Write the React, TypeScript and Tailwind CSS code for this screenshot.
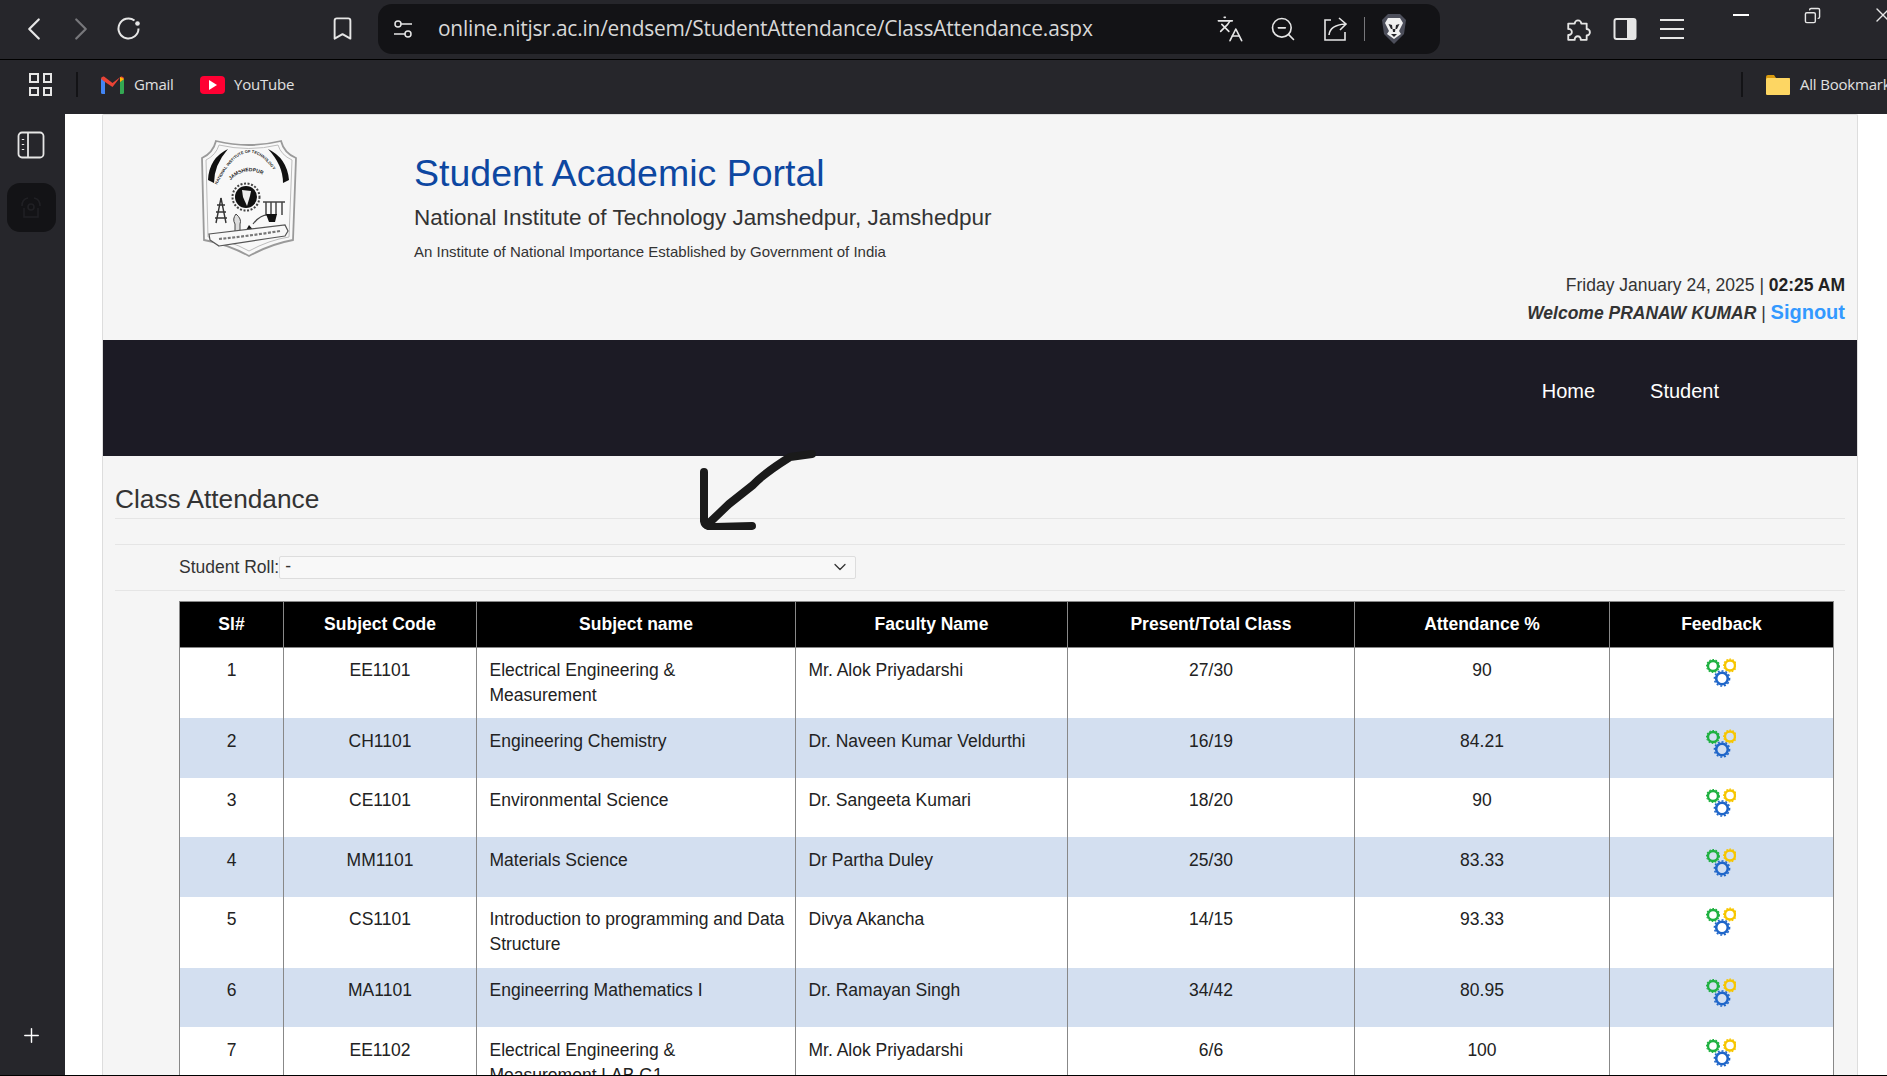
import { ChevronLeft, ChevronRight, Bookmark, Languages, ZoomOut, Copy, X, Plus, ChevronDown } from "lucide-react";

const rows = [
  { no: 1, code: "EE1101", name: "Electrical Engineering & Measurement", faculty: "Mr. Alok Priyadarshi", count: "27/30", pct: "90", tall: true },
  { no: 2, code: "CH1101", name: "Engineering Chemistry", faculty: "Dr. Naveen Kumar Veldurthi", count: "16/19", pct: "84.21" },
  { no: 3, code: "CE1101", name: "Environmental Science", faculty: "Dr. Sangeeta Kumari", count: "18/20", pct: "90" },
  { no: 4, code: "MM1101", name: "Materials Science", faculty: "Dr Partha Duley", count: "25/30", pct: "83.33" },
  { no: 5, code: "CS1101", name: "Introduction to programming and Data Structure", faculty: "Divya Akancha", count: "14/15", pct: "93.33", tall: true },
  { no: 6, code: "MA1101", name: "Engineerring Mathematics I", faculty: "Dr. Ramayan Singh", count: "34/42", pct: "80.95" },
  { no: 7, code: "EE1102", name: "Electrical Engineering & Measurement LAB G1", faculty: "Mr. Alok Priyadarshi", count: "6/6", pct: "100", tall: true },
];

function Gears() {
  return (
    <svg width="30" height="30" viewBox="0 0 30 30" className="mx-auto -translate-x-px -translate-y-px" fill="none">
      <circle cx="7" cy="9" r="5" stroke="#1fb141" strokeWidth="2.4" />
      <circle cx="7" cy="9" r="6.4" stroke="#1fb141" strokeWidth="1.2" strokeDasharray="1.6 1.6" />
      <circle cx="24" cy="8.5" r="5" stroke="#f7c600" strokeWidth="2.4" />
      <circle cx="24" cy="8.5" r="6.4" stroke="#f7c600" strokeWidth="1.2" strokeDasharray="1.6 1.6" />
      <circle cx="16" cy="21.5" r="5.8" stroke="#1f66c9" strokeWidth="2.6" />
      <circle cx="16" cy="21.5" r="7.6" stroke="#1f66c9" strokeWidth="1.5" strokeDasharray="2 1.9" />
    </svg>
  );
}

function Crest() {
  return (
    <svg width="96" height="117" viewBox="0 0 96 117" fill="none">
      <path d="M15 1 Q48 9 80 1 Q83 13 95 18 L92 100 Q70 104 48 116 Q26 104 3 100 L1 18 Q12 13 15 1Z" fill="#f8f8f8" stroke="#9a9a9a" strokeWidth="1.8" />
      <path d="M18 5 Q48 12 77 5 Q80 15 91 20 L88 97 Q68 100 48 111 Q28 100 7 97 L5 20 Q15 15 18 5Z" stroke="#bdbdbd" strokeWidth="1" />
      <path d="M27 9 Q8 18 7 40 L13 43 Q13 25 27 9Z" fill="#111" />
      <path d="M67 9 Q86 18 88 40 L82 43 Q82 25 67 9Z" fill="#111" />
      <path id="crest-arc" d="M16 45 Q47 -18 80 42" />
      <text fontSize="4" fontFamily="Liberation Sans, sans-serif" fontWeight="700" fill="#222">
        <textPath href="#crest-arc">NATIONAL INSTITUTE OF TECHNOLOGY</textPath>
      </text>
      <path id="crest-arc-2" d="M24 46 Q47 18 72 43" />
      <text fontSize="5" fontFamily="Liberation Sans, sans-serif" fontWeight="700" fill="#222">
        <textPath href="#crest-arc-2" startOffset="14%">JAMSHEDPUR</textPath>
      </text>
      <circle cx="45" cy="57" r="13.5" stroke="#444" strokeWidth="2" strokeDasharray="2 1.6" />
      <circle cx="45" cy="57" r="11" fill="#111" />
      <path d="M41 50 L50 51 L49 56 L46 66 L42 57Z" fill="#eee" />
      <path d="M20 58 L15 83 M20 58 L25 83 M16 65 H24 M15 72 H25 M14 78 H26" stroke="#333" strokeWidth="1.4" />
      <path d="M62 62 H84 M65 62 V75 M70 62 V75 M75 62 V75 M81 62 V75" stroke="#444" strokeWidth="1.5" />
      <path d="M35 74 Q31 79 34 84 V92 H39 V84 Q41 79 35 74Z" fill="#ddd" stroke="#444" />
      <path d="M44 92 L48 85 L54 92Z" fill="#111" />
      <path d="M52 84 Q60 74 68 75" stroke="#444" strokeWidth="1.2" />
      <path d="M65 74 H76 L74 82 H68Z" fill="#111" />
      <path d="M8 94 L84 85 L87 91 L84 96 Q50 101 18 106 L9 100Z" fill="#f8f8f8" stroke="#555" strokeWidth="1.2" />
      <path d="M18 99 Q48 96 79 91" stroke="#777" strokeWidth="2.2" strokeDasharray="3 1.5" />
    </svg>
  );
}

function Slot({ children }: { children: React.ReactNode }) {
  return <div className="w-[47px] flex justify-center items-center shrink-0">{children}</div>;
}

function Toolbar() {
  return (
    <div className="h-[60px] bg-[#26262b] border-b border-black flex items-center pl-[10.5px] pb-[2px] text-[#e6e6e6] shrink-0">
      <Slot><ChevronLeft size={38} strokeWidth={1.4} /></Slot>
      <Slot><ChevronRight size={38} strokeWidth={1.4} className="text-[#77777b]" /></Slot>
      <Slot>
        <svg width="25" height="25" viewBox="0 0 25 25" fill="none" stroke="currentColor" strokeWidth="2">
          <path d="M18.5 4.5 A10 10 0 1 0 22.5 12.5" />
          <circle cx="21.5" cy="7.5" r="2.3" fill="currentColor" stroke="none" />
        </svg>
      </Slot>
      <div className="ml-[167px]"><Slot><Bookmark size={27} strokeWidth={1.7} /></Slot></div>
      <div className="ml-[12.5px] w-[1062px] h-[50px] bg-[#131316] rounded-[14px] flex items-center pl-[13px] shrink-0">
        <svg width="24" height="24" viewBox="0 0 24 24" fill="none" stroke="currentColor" strokeWidth="1.5">
          <circle cx="7" cy="7" r="3" />
          <path d="M10 7 H21 M3 17 H14" />
          <circle cx="17" cy="17" r="3" />
        </svg>
        <span className="ml-[23px] text-[20.9px] text-[#d8d8d8] font-['Open_Sans',sans-serif] tracking-[-0.2px]">online.nitjsr.ac.in/endsem/StudentAttendance/ClassAttendance.aspx</span>
        <div className="ml-auto flex items-center pr-[33px] gap-[25px]">
          <Languages size={28} strokeWidth={1.4} />
          <ZoomOut size={28} strokeWidth={1.4} />
          <svg width="28" height="28" viewBox="0 0 28 28" fill="none" stroke="currentColor" strokeWidth="1.6">
            <path d="M9 5 H3 V25 H23 V17" />
            <path d="M7 20 Q8 10 23 9 M17 3 L24 9 L18 15" />
          </svg>
          <div className="flex items-center gap-[16px] -ml-[11px]">
            <div className="w-px h-[24px] bg-[#77777b]" />
            <svg width="26" height="32" viewBox="0 0 26 32">
              <path d="M7 1 H19 L25 7 L23 21 L13 31 L3 21 L1 7Z" fill="#4c4e5a" />
              <path d="M7 5 H19 L22 10 L18 18 L20 21 L13 26 L6 21 L8 18 L4 10Z" fill="#f0f0f0" />
              <path d="M7.5 11 L11 12 L12 19 H14 L15 12 L18.5 11 L16 16 H10Z" fill="#26262b" />
              <path d="M10 21 H16 L13 24Z" fill="#26262b" />
            </svg>
          </div>
        </div>
      </div>
      <div className="ml-[114.5px] flex">
        <Slot>
          <svg width="26" height="26" viewBox="0 0 24 24" fill="none" stroke="currentColor" strokeWidth="1.7" strokeLinejoin="round">
            <path d="M3 7 H9 A3 3 0 1 1 15 7 H20 V12 A3 3 0 1 1 20 18 V22 H14.5 A2.8 2.8 0 1 0 9 22 H3 V17.5 A2.8 2.8 0 1 0 3 12Z" />
          </svg>
        </Slot>
        <Slot>
          <svg width="24" height="24" viewBox="0 0 24 24" fill="none">
            <rect x="1.5" y="2" width="21" height="20" rx="2" stroke="#e6e6e6" strokeWidth="2" />
            <rect x="14" y="2" width="9" height="20" fill="#e6e6e6" />
          </svg>
        </Slot>
        <Slot>
          <div className="flex flex-col gap-[7px]">
            <div className="w-[24px] h-[2px] bg-[#e6e6e6]" />
            <div className="w-[24px] h-[2px] bg-[#e6e6e6]" />
            <div className="w-[24px] h-[2px] bg-[#e6e6e6]" />
          </div>
        </Slot>
      </div>
      <div className="ml-[10px] flex self-start mt-[3px] shrink-0">
        <div className="w-[71px] h-[24px] flex justify-center items-center"><div className="w-[16px] h-[2px] bg-white" /></div>
        <div className="w-[71px] h-[24px] flex justify-center items-center"><Copy size={17} className="-scale-x-100" /></div>
        <div className="w-[71px] h-[24px] flex justify-center items-center"><X size={24} strokeWidth={1.4} /></div>
      </div>
    </div>
  );
}

function Bookmarks() {
  return (
    <div className="h-[54px] bg-[#26262b] flex items-center pl-[29px] pb-[5px] text-[#e0e0e0] text-[15px] font-['Open_Sans',sans-serif] tracking-[-0.2px] shrink-0 whitespace-nowrap overflow-hidden">
      <div className="grid grid-cols-2 gap-[4px] shrink-0">
        <div className="w-[9.5px] h-[9.5px] border-2 border-[#e6e6e6]" />
        <div className="w-[9.5px] h-[9.5px] border-2 border-[#e6e6e6]" />
        <div className="w-[9.5px] h-[9.5px] border-2 border-[#e6e6e6]" />
        <div className="w-[9.5px] h-[9.5px] border-2 border-[#e6e6e6]" />
      </div>
      <div className="ml-[24px] w-[2px] h-[25px] bg-[#131316] shrink-0" />
      <svg className="ml-[23px] shrink-0" width="23" height="18" viewBox="0 0 23 18">
        <path d="M0 3 L4 1 V18 H1.5 Q0 18 0 16.5Z" fill="#4285f4" />
        <path d="M23 3 L19 1 V18 H21.5 Q23 18 23 16.5Z" fill="#34a853" />
        <path d="M0 3 Q0 0 3 0.5 L11.5 7 L20 0.5 Q23 0 23 3 L19 6 V1.5 L11.5 11 L4 6 L0 3Z" fill="#ea4335" />
        <path d="M19 1 L23 3 L19 6Z" fill="#fbbc04" />
      </svg>
      <span className="ml-[10px] w-[40px] shrink-0">Gmail</span>
      <div className="ml-[26px] w-[25px] h-[18px] bg-[#ff0033] rounded-[4px] flex items-center justify-center shrink-0">
        <svg width="9" height="10" viewBox="0 0 9 10"><path d="M1 0 L9 5 L1 10Z" fill="#fff" /></svg>
      </div>
      <span className="ml-[9px] w-[60px] shrink-0">YouTube</span>
      <div className="ml-[1447px] w-[2px] h-[25px] bg-[#131316] shrink-0" />
      <svg className="ml-[23px] shrink-0" width="24" height="20" viewBox="0 0 24 20">
        <path d="M0 2 Q0 0 2 0 H8 L10 3 H24 V18 Q24 20 22 20 H2 Q0 20 0 18Z" fill="#d99a0e" />
        <rect x="0" y="3" width="24" height="17" rx="1.5" fill="#fdd663" />
      </svg>
      <span className="ml-[10px] shrink-0">All Bookmarks</span>
    </div>
  );
}

function Sidebar() {
  return (
    <div className="w-[65px] bg-[#26262b] flex flex-col items-center shrink-0 pr-[3px]">
      <svg className="mt-[17px]" width="28" height="28" viewBox="0 0 28 28" fill="none" stroke="#e6e6e6" strokeWidth="1.8">
        <rect x="1.5" y="1.5" width="25" height="25" rx="3.5" />
        <path d="M11 1.5 V26.5" />
        <path d="M6 8 V9 M6 13 V14 M6 18 V19" strokeWidth="2.4" />
      </svg>
      <div className="mt-[24px] w-[49px] h-[49px] bg-[#131316] rounded-[13px] flex items-center justify-center">
        <svg width="24" height="24" viewBox="0 0 24 24" fill="none" stroke="#202024" strokeWidth="1.6">
          <path d="M3 10 Q3 3 9 2 M21 10 Q21 3 15 2" />
          <circle cx="12" cy="11" r="3" />
          <path d="M5 12 V21 H19 V12" />
        </svg>
      </div>
      <Plus className="mt-auto mb-[28px] text-white" size={23} strokeWidth={1.5} />
    </div>
  );
}

function AttendanceTable() {
  return (
    <table className="table-fixed border-collapse w-[1654px] ml-[64px] mt-[10px] text-[17.5px] leading-[25.2px] text-[#222]">
      <colgroup>
        <col className="w-[104px]" />
        <col className="w-[193px]" />
        <col className="w-[319px]" />
        <col className="w-[272px]" />
        <col className="w-[287px]" />
        <col className="w-[255px]" />
        <col className="w-[224px]" />
      </colgroup>
      <thead>
        <tr className="bg-black text-white h-[46px] font-bold">
          {["Sl#", "Subject Code", "Subject name", "Faculty Name", "Present/Total Class", "Attendance %", "Feedback"].map((h) => (
            <th key={h} className="border border-[#888] font-bold text-center pt-[2px]">{h}</th>
          ))}
        </tr>
      </thead>
      <tbody>
        {rows.map((r) => (
          <tr key={r.no} className={`${r.no % 2 === 0 ? "bg-[#d3dff0]" : "bg-white"} ${r.tall ? "h-[71px]" : "h-[59.5px]"}`}>
            <td className="border-x border-[#888] align-top pt-[10.5px] text-center">{r.no}</td>
            <td className="border-x border-[#888] align-top pt-[10.5px] text-center">{r.code}</td>
            <td className="border-x border-[#888] align-top pt-[10.5px] pl-[12.5px] pr-[10px]">{r.name}</td>
            <td className="border-x border-[#888] align-top pt-[10.5px] px-[12.5px]">{r.faculty}</td>
            <td className="border-x border-[#888] align-top pt-[10.5px] text-center">{r.count}</td>
            <td className="border-x border-[#888] align-top pt-[10.5px] text-center">{r.pct}</td>
            <td className="border-x border-[#888] align-top pt-[10.5px] text-center"><Gears /></td>
          </tr>
        ))}
      </tbody>
    </table>
  );
}

export default function App() {
  return (
    <div className="h-screen overflow-hidden flex flex-col bg-[#26262b] font-['Liberation_Sans',Arial,sans-serif] border-b border-black">
      <Toolbar />
      <Bookmarks />
      <div className="flex flex-1 min-h-0">
        <Sidebar />
        <main className="flex-1 bg-white pl-[37px] pr-[29px] overflow-hidden">
          <div className="relative bg-[#f5f5f5] border-x border-t border-[#ddd] rounded-t-[2px] text-[#333]">
            <header className="h-[225px] relative flex">
              <div className="ml-[98px] mt-[25px] shrink-0"><Crest /></div>
              <div className="ml-[117px] mt-[37.5px]">
                <h1 className="text-[37.5px] leading-[40px] text-[#0d47a1]">Student Academic Portal</h1>
                <p className="mt-[10.5px] text-[22.5px] leading-[30px] text-[#333]">National Institute of Technology Jamshedpur, Jamshedpur</p>
                <p className="mt-[9px] text-[15px] leading-[20px] text-[#333]">An Institute of National Importance Established by Government of India</p>
              </div>
              <div className="ml-auto mt-[156.5px] pr-[12px] text-right text-[17.5px] leading-[27.5px]">
                <div>Friday January 24, 2025 | <b className="text-[#222]">02:25 AM</b></div>
                <div><b className="italic">Welcome PRANAW KUMAR</b> | <a className="font-bold text-[20px] text-[#3399ff]">Signout</a></div>
              </div>
            </header>
            <nav className="h-[115.5px] bg-[#1c1b25] flex items-center justify-end text-white text-[20px] gap-[55px] pr-[138px] pb-[14px]">
              <span>Home</span>
              <span>Student</span>
            </nav>
            <section className="px-[12px]">
              <h2 className="mt-[26.5px] text-[26.25px] leading-[34px] border-b border-[#e5e5e5] h-[36.5px] text-[#333]">Class Attendance</h2>
              <div className="mt-[25px] border-t border-b border-[#e5e5e5] h-[47px] pl-[64px] flex items-center text-[17.5px]">
                <span>Student Roll:</span>
                <div className="w-[577px] h-[23px] border border-[#ddd] rounded-[2px] flex items-center justify-between pl-[5px] pr-[5px] bg-[#f8f8f8] leading-none">
                  <span>-</span>
                  <ChevronDown size={20} strokeWidth={1.5} />
                </div>
              </div>
              <AttendanceTable />
            </section>
            {/* marker arrow drawn over the screenshot */}
            <svg className="absolute left-[590px] top-[325px]" width="130" height="90" viewBox="0 0 130 90" fill="none" stroke="#1a1a1a" strokeWidth="8" strokeLinecap="round" strokeLinejoin="round">
              <path d="M119 14 L97 17 Q70 34 60 45 L36 64 L14 85" />
              <path d="M11 32 L11 81 Q12 87 22 87 L59 86" />
            </svg>
          </div>
        </main>
      </div>
    </div>
  );
}
